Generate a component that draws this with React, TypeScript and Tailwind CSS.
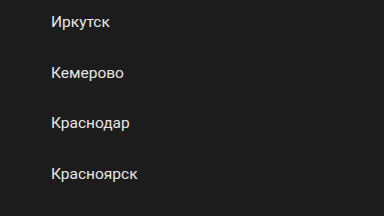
const cities = ["Иркутск", "Кемерово", "Краснодар", "Красноярск"];

export default function App() {
  return (
    <div className="h-[216px] w-[384px] overflow-hidden bg-[#1c1c1c] font-['Roboto',sans-serif]">
      <ul className="-mt-[3px]">
        {cities.map((city) => (
          <li
            key={city}
            className="flex h-[50.8px] items-center pl-[51px] text-[15.5px] text-[#e6e6e6]"
          >
            {city}
          </li>
        ))}
      </ul>
    </div>
  );
}
